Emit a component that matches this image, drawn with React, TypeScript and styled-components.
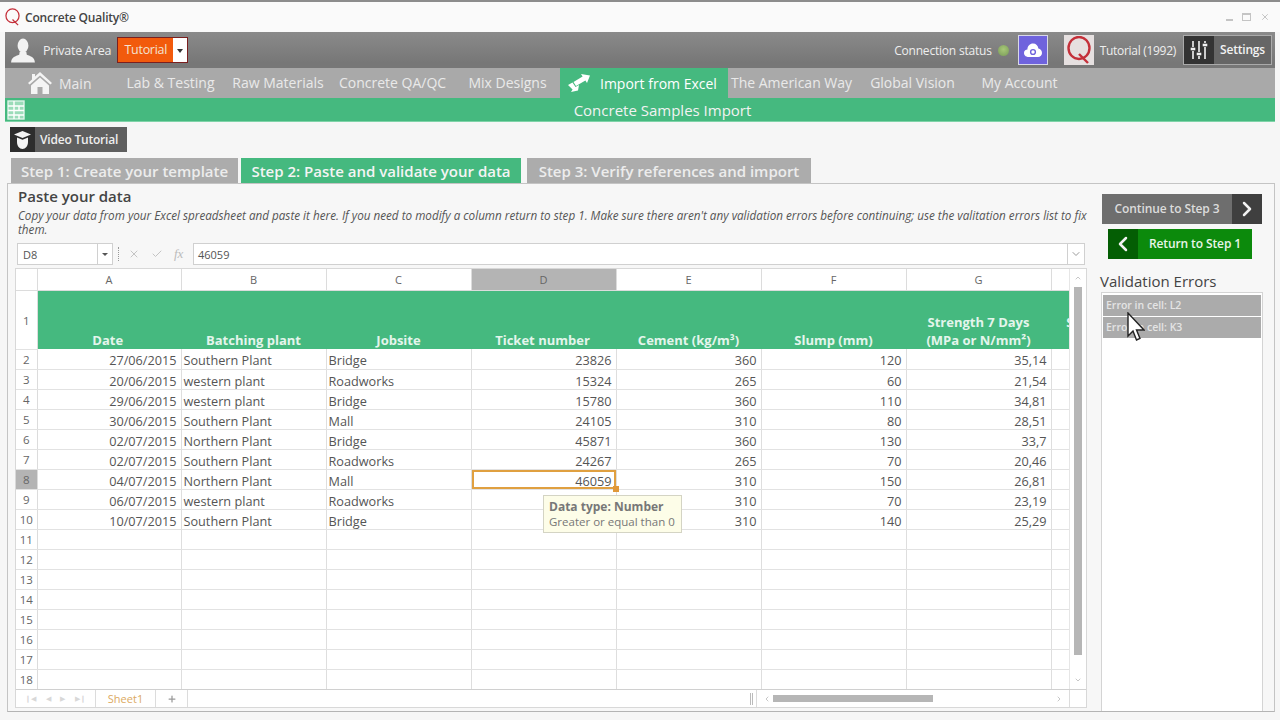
import React from 'react'
import styled, { createGlobalStyle } from 'styled-components'
import { ChevronLeft, ChevronRight, ChevronDown, X, Check, Plus } from 'lucide-react'

const GREEN = '#45b97f'
const FONT = '"Open Sans", "Noto Sans", sans-serif'

const GlobalStyle = createGlobalStyle`
  html, body {
    margin: 0;
    padding: 0;
    background: #f6f6f6;
    font-family: ${FONT};
    overflow: hidden;
  }
  * { box-sizing: border-box; }
`

const navItems = [
  { label: 'Lab & Testing', w: 111 },
  { label: 'Raw Materials', w: 104 },
  { label: 'Concrete QA/QC', w: 125 },
  { label: 'Mix Designs', w: 105 },
]
const navItemsRight = [
  { label: 'The American Way', w: 127 },
  { label: 'Global Vision', w: 115 },
  { label: 'My Account', w: 99 },
]

const columns = ['A', 'B', 'C', 'D', 'E', 'F', 'G']
const rows = [
  ['27/06/2015', 'Southern Plant', 'Bridge', '23826', '360', '120', '35,14'],
  ['20/06/2015', 'western plant', 'Roadworks', '15324', '265', '60', '21,54'],
  ['29/06/2015', 'western plant', 'Bridge', '15780', '360', '110', '34,81'],
  ['30/06/2015', 'Southern Plant', 'Mall', '24105', '310', '80', '28,51'],
  ['02/07/2015', 'Northern Plant', 'Bridge', '45871', '360', '130', '33,7'],
  ['02/07/2015', 'Southern Plant', 'Roadworks', '24267', '265', '70', '20,46'],
  ['04/07/2015', 'Northern Plant', 'Mall', '46059', '310', '150', '26,81'],
  ['06/07/2015', 'western plant', 'Roadworks', '', '310', '70', '23,19'],
  ['10/07/2015', 'Southern Plant', 'Bridge', '', '310', '140', '25,29'],
]
const emptyRows = [11, 12, 13, 14, 15, 16, 17, 18]

const Page = styled.div`
  width: 1280px;
  height: 720px;
  overflow: hidden;
  position: relative;
  border-top: 2px solid #8c8c8c;
  background: #f6f6f6;
  display: flex;
  flex-direction: column;
`

const TitleBar = styled.div`
  height: 30px;
  padding: 0 6px 0 5px;
  display: flex;
  align-items: center;
  gap: 5px;
  background: #fafafa;
  font-size: 12px;
  font-weight: 600;
  color: #444;
`

const TitleText = styled.span`
  flex: 1;
  letter-spacing: -0.2px;
`

const WindowControls = styled.div`
  display: flex;
  align-items: center;
  gap: 9px;
  color: #bbb;
  padding-right: 4px;
`

const MinLine = styled.span`
  width: 7px;
  height: 2px;
  margin-top: 6px;
  background: #c4c4c4;
`

const MaxBox = styled.span`
  width: 9px;
  height: 8px;
  border: 1px solid #c4c4c4;
  border-top-width: 2px;
`

const Shell = styled.div`
  margin: 0 5px;
  display: flex;
  flex-direction: column;
`

const UserBar = styled.div`
  height: 36px;
  padding: 0 3px 0 5px;
  background: linear-gradient(#8a8a8a, #777 85%);
  display: flex;
  align-items: center;
  color: #eee;
  font-size: 12.5px;
`

const AreaLabel = styled.span`
  margin: 0 6px 0 7px;
  letter-spacing: -0.2px;
`

const TutorialSelect = styled.div`
  width: 71px;
  height: 26px;
  display: flex;
  border: 1px solid #7a1f1f;
  background: #f25a0c;
  color: #f3e3d3;
`

const TutorialLabel = styled.span`
  flex: 1;
  line-height: 24px;
  text-align: center;
  letter-spacing: -0.3px;
`

const TutorialArrow = styled.span`
  width: 14px;
  background: #fff;
  display: flex;
  align-items: center;
  justify-content: center;

  &::after {
    content: '';
    border: 3px solid transparent;
    border-top: 4px solid #333;
    margin-top: 4px;
  }
`

const Spacer = styled.div`
  flex: 1;
`

const StatusText = styled.span`
  font-size: 12px;
  letter-spacing: -0.2px;
`

const StatusDot = styled.span`
  width: 11px;
  height: 11px;
  margin: 0 9px 0 6px;
  border-radius: 50%;
  background: radial-gradient(circle at 50% 40%, #a8c878, #789a58);
`

const CloudButton = styled.div`
  width: 30px;
  height: 30px;
  background: #6f63dd;
  border: 1px solid #d8d8e8;
  display: flex;
  align-items: center;
  justify-content: center;
  margin-right: 16px;
`

const QBadge = styled.div`
  width: 30px;
  height: 30px;
  background: #e6e0e0;
  display: flex;
  align-items: center;
  justify-content: center;
`

const AccountName = styled.span`
  margin: 0 7px 0 6px;
  font-size: 12px;
  letter-spacing: -0.3px;
`

const SettingsButton = styled.div`
  width: 89px;
  height: 30px;
  display: flex;
  border: 1px solid #aaa;
  background: #666;
  color: #f2f2f2;
  font-size: 12px;
  font-weight: 600;
`

const SettingsIcon = styled.span`
  width: 30px;
  background: #333;
  display: flex;
  align-items: center;
  justify-content: center;
`

const SettingsLabel = styled.span`
  flex: 1;
  text-align: center;
  line-height: 28px;
  letter-spacing: -0.2px;
`

const NavBar = styled.nav`
  height: 30px;
  background: #a9a9a9;
  display: flex;
  color: #e9e9e9;
  font-size: 14px;
`

const NavItem = styled.div<{ $w: number }>`
  width: ${p => p.$w}px;
  text-align: center;
  line-height: 30px;
  white-space: nowrap;
`

const HomeItem = styled.div`
  width: 110px;
  padding-left: 23px;
  display: flex;
  align-items: center;
  gap: 7px;
`

const ActiveItem = styled.div`
  width: 168px;
  padding-left: 8px;
  display: flex;
  align-items: center;
  gap: 10px;
  background: ${GREEN};
  color: #fff;
  white-space: nowrap;
`

const SectionBand = styled.div`
  height: 24px;
  background: ${GREEN};
  color: #f2f2f2;
  font-size: 15px;
  display: flex;
  align-items: center;
  border-bottom: 1px solid #7fd3a8;
`

const BandIcon = styled.span`
  width: 22px;
  height: 24px;
  display: flex;
  align-items: center;
  justify-content: center;
`

const BandTitle = styled.span`
  flex: 1;
  text-align: center;
  padding-left: 23px;
`

const VideoButton = styled.div`
  margin: 5px 0 0 10px;
  width: 117px;
  height: 25px;
  display: flex;
  background: #5f5f5f;
  color: #eee;
  font-size: 12px;
  font-weight: 600;
  align-items: center;
  letter-spacing: -0.2px;
`

const VideoIcon = styled.span`
  width: 25px;
  height: 25px;
  background: #2d2d2d;
  margin-right: 5px;
  display: flex;
  align-items: center;
  justify-content: center;
`

const Tabs = styled.div`
  margin: 6px 0 0 11px;
  height: 25px;
  display: flex;
`

const Tab = styled.div<{ $active?: boolean; $w: number; $ml?: number }>`
  width: ${p => p.$w}px;
  margin-left: ${p => p.$ml ?? 0}px;
  background: ${p => (p.$active ? GREEN : '#acacac')};
  color: ${p => (p.$active ? '#f4f4f4' : '#ececec')};
  font-size: 15px;
  font-weight: 600;
  line-height: 27px;
  text-align: center;
  white-space: nowrap;
`

const Panel = styled.div`
  margin-left: 7px;
  width: 1268px;
  height: 529px;
  display: flex;
  border: 1px solid #c4c4c4;
  border-bottom-color: #b4b4b4;
  background: #f7f7f7;
`

const LeftColumn = styled.div`
  width: 1084px;
  padding: 3px 0 0 7px;
  display: flex;
  flex-direction: column;
`

const Heading = styled.h2`
  margin: 0 0 0 3px;
  font-size: 15px;
  line-height: 18px;
  font-weight: 600;
  color: #444;
`

const Hint = styled.p`
  margin: 3px 0 0 3px;
  width: 1074px;
  font-size: 11.7px;
  line-height: 14px;
  font-style: italic;
  color: #555;
`

const FormulaBar = styled.div`
  margin: 7px 0 0 2px;
  width: 1068px;
  height: 22px;
  display: flex;
  align-items: stretch;
  font-size: 11px;
  color: #555;
`

const NameBox = styled.div`
  width: 96px;
  display: flex;
  align-items: center;
  justify-content: space-between;
  padding-left: 5px;
  background: #fff;
  border: 1px solid #d0d0d0;
`

const NameArrow = styled.span`
  width: 15px;
  height: 100%;
  border-left: 1px solid #d0d0d0;
  display: flex;
  align-items: center;
  justify-content: center;

  &::after {
    content: '';
    border: 3px solid transparent;
    border-top: 3px solid #555;
    margin-top: 3px;
  }
`

const Grip = styled.span`
  width: 1px;
  margin: 4px 9px 4px 5px;
  border-left: 1px dotted #999;
`

const FormulaIcons = styled.div`
  width: 65px;
  display: flex;
  align-items: center;
  gap: 11px;
  color: #c4c4c4;
`

const Fx = styled.i`
  font-family: 'Liberation Serif', serif;
  font-size: 13px;
  color: #bbb;
`

const FormulaInput = styled.div`
  flex: 1;
  display: flex;
  align-items: center;
  padding-left: 4px;
  background: #fff;
  border: 1px solid #d0d0d0;
`

const FormulaToggle = styled.div`
  width: 17px;
  display: flex;
  align-items: center;
  justify-content: center;
  background: #fff;
  border: 1px solid #d0d0d0;
  border-left: 0;
  color: #999;
`

const Sheet = styled.div`
  margin-top: 3px;
  width: 1072px;
  height: 440px;
  display: flex;
  flex-direction: column;
  background: #fff;
  border: 1px solid #d8d8d8;
`

const SheetBody = styled.div`
  flex: 1;
  display: flex;
  overflow: hidden;
  position: relative;
`

const TableClip = styled.div`
  width: 1053px;
  overflow: hidden;
`

const Table = styled.table`
  border-collapse: collapse;
  table-layout: fixed;
  width: 1180px;
  font-size: 12.7px;
  color: #555;
`

const HeadCell = styled.th<{ $selected?: boolean }>`
  height: 21px;
  padding: 0;
  font-weight: 400;
  text-align: center;
  color: #666;
  font-size: 11px;
  background: ${p => (p.$selected ? '#b4b4b4' : '#fff')};
  border-right: 1px solid #dcdcdc;
  border-bottom: 1px solid #dcdcdc;
`

const ColCell = styled.col<{ $w: number }>`
  width: ${p => p.$w}px;
`

const RowHead = styled.td<{ $selected?: boolean }>`
  height: 20px;
  padding: 1px 0 0;
  text-align: center;
  font-size: 11.5px;
  color: #666;
  background: ${p => (p.$selected ? '#b4b4b4' : '#fff')};
  border-right: 1px solid #dcdcdc;
  border-bottom: 1px solid #e2e2e2;
`

const TitleCell = styled.td<{ $shift?: number }>`
  height: 59px;
  padding: 0 ${p => 2 + (p.$shift ?? 0)}px 0 2px;
  background: ${GREEN};
  color: #e4f5ec;
  font-size: 13px;
  line-height: 18px;
  font-weight: 700;
  text-align: center;
  vertical-align: bottom;
  white-space: nowrap;
  overflow: hidden;
`

const Cell = styled.td<{ $num?: boolean; $selected?: boolean }>`
  height: 20px;
  padding: 3px 4px 0 2px;
  line-height: 16px;
  text-align: ${p => (p.$num ? 'right' : 'left')};
  white-space: nowrap;
  position: ${p => (p.$selected ? 'relative' : 'static')};
  border-right: 1px solid #dedede;
  border-bottom: 1px solid #e2e2e2;
  box-shadow: ${p => (p.$selected ? 'inset 0 0 0 2px #e0a040' : 'none')};
`

const FillHandle = styled.span`
  position: absolute;
  right: -3px;
  bottom: -3px;
  width: 6px;
  height: 6px;
  background: #e0983a;
`

const ValidationTip = styled.div`
  position: absolute;
  left: 527px;
  top: 226px;
  width: 139px;
  height: 38px;
  padding: 3px 0 0 5px;
  background: #fdfde8;
  border: 1px solid #d4d4c4;
  color: #777;
  font-size: 11.5px;
  line-height: 15px;
  white-space: nowrap;
  z-index: 2;
`

const TipTitle = styled.div`
  font-weight: 700;
  font-size: 12px;
`

const VScroll = styled.div`
  flex: 1;
  display: flex;
  flex-direction: column;
  align-items: center;
  background: #fff;
  border-left: 1px solid #e6e6e6;
`

const ScrollUpDown = styled.span`
  height: 18px;
  color: #aaa;
  display: flex;
  align-items: center;
`

const VThumb = styled.div`
  width: 8px;
  height: 368px;
  background: #b6b6b6;
`

const VTrack = styled.div`
  flex: 1;
`

const SheetFooter = styled.div`
  height: 18px;
  display: flex;
  border-top: 1px solid #d0d0d0;
  font-size: 11px;
`

const SheetNav = styled.div`
  width: 80px;
  display: flex;
  align-items: center;
  justify-content: space-around;
  padding: 0 4px;
  color: #d8d8d8;
  font-size: 7px;
  border-right: 1px solid #dcdcdc;
`

const SheetTab = styled.div`
  width: 60px;
  line-height: 17px;
  text-align: center;
  color: #dcaa62;
  border-right: 1px solid #dcdcdc;
`

const AddSheet = styled.div`
  width: 32px;
  display: flex;
  align-items: center;
  justify-content: center;
  color: #999;
  border-right: 1px solid #dcdcdc;
`

const FooterGap = styled.div`
  flex: 1;
  display: flex;
  justify-content: flex-end;
  align-items: center;
  padding-right: 3px;
`

const SplitGrip = styled.span`
  width: 3px;
  height: 12px;
  border-left: 1px solid #bbb;
  border-right: 1px solid #bbb;
`

const HScroll = styled.div`
  width: 314px;
  display: flex;
  align-items: center;
  padding: 0 6px 0 6px;
  gap: 2px;
  color: #aaa;
  border-left: 1px solid #dcdcdc;
  border-right: 1px solid #dcdcdc;
`

const HThumb = styled.div`
  width: 160px;
  height: 7px;
  background: #b6b6b6;
`

const FooterCorner = styled.div`
  width: 16px;
`

const RightColumn = styled.div`
  flex: 1;
  padding: 10px 0 0 8px;
  display: flex;
  flex-direction: column;
  position: relative;
`

const StepButton = styled.div<{ $back?: boolean }>`
  width: ${p => (p.$back ? 144 : 160)}px;
  height: 30px;
  margin: ${p => (p.$back ? '5px 0 0 8px' : '0 0 0 2px')};
  display: flex;
  flex-direction: ${p => (p.$back ? 'row' : 'row-reverse')};
  background: ${p => (p.$back ? '#0c8a0c' : '#6e6e6e')};
  color: ${p => (p.$back ? '#e8f5e8' : '#dcdcdc')};
  font-size: 12px;
  font-weight: 600;
  letter-spacing: -0.1px;
`

const StepArrow = styled.span<{ $back?: boolean }>`
  width: 30px;
  background: ${p => (p.$back ? '#045e04' : '#3f3f3f')};
  color: #f2f2f2;
  display: flex;
  align-items: center;
  justify-content: center;
`

const StepLabel = styled.span`
  flex: 1;
  text-align: center;
  line-height: 30px;
`

const ErrorsTitle = styled.h3`
  margin: 12px 0 0 0;
  font-size: 15px;
  line-height: 20px;
  font-weight: 400;
  color: #444;
`

const ErrorList = styled.div`
  margin: 1px 0 0 1px;
  width: 162px;
  flex: 1;
  padding: 2px 1px;
  display: flex;
  flex-direction: column;
  gap: 1px;
  background: #fff;
  border: 1px solid #d4d4d4;
  border-bottom: 0;
`

const ErrorRow = styled.div`
  height: 21px;
  padding-left: 3px;
  background: #ababab;
  color: #e4e4e4;
  font-size: 10.5px;
  font-weight: 600;
  line-height: 21px;
`

const Cursor = styled.svg`
  position: absolute;
  left: 1127px;
  top: 310px;
  z-index: 5;
`

const UserIcon = () => (
  <svg width="26" height="27" viewBox="0 0 24 24" fill="#f2f2f2">
    <ellipse cx="12" cy="7.5" rx="5" ry="6.5" />
    <path d="M9 13 L15 13 L15.5 16 C19 17.5 22.5 18 23 23 L1 23 C1.5 18 5 17.5 8.5 16 Z" />
  </svg>
)

const QLogo = ({ w, h, stroke }: { w: number; h: number; stroke: number }) => (
  <svg width={w} height={h} viewBox="0 0 24 28" fill="none" stroke="#c4303a" strokeWidth={stroke}>
    <ellipse cx="12" cy="12" rx="10.5" ry="11" />
    <path d="M12 18 L21 27" />
  </svg>
)

const HomeIcon = () => (
  <svg width="24" height="22" viewBox="0 0 24 22" fill="#f4f4f4">
    <path d="M12 0 L24 11 L22.4 12.6 L12 3.4 L1.6 12.6 L0 11 L4 7.4 L4 2 L7 2 L7 4.6 Z" />
    <path d="M12 5.4 L21 13.4 L21 22 L14.5 22 L14.5 15 L9.5 15 L9.5 22 L3 22 L3 13.4 Z" />
  </svg>
)

const SwapIcon = () => (
  <svg width="22" height="18" viewBox="0 0 22 18" fill="#fff">
    <path d="M13 0 L22 1.5 L19 9 L17.4 6.4 L8 12 L5.5 8 L14.6 2.6 Z" />
    <path d="M0 11 L4.5 8.5 L7.5 13 L11 11 L10 16.5 L3 18 L4.6 15.4 Z" />
  </svg>
)

const TableIcon = () => (
  <svg width="18" height="20" viewBox="0 0 18 20" fill="none" stroke="#dff3e8" strokeWidth="1.4">
    <rect x="1" y="1" width="16" height="18" fill="#9bdcb9" />
    <path d="M1 6 H17 M1 10.5 H17 M1 15 H17 M7 1 V19 M12 6 V10.5 M12 15 V19" stroke="#fff" />
  </svg>
)

const CloudIcon = () => (
  <svg width="18" height="14" viewBox="0 0 18 14">
    <path d="M5 14 C1 14 0 11.5 0 10 C0 8 1.5 6.5 3.4 6.5 C3.4 3 6 0.5 9 0.5 C12 0.5 14 2.5 14.4 5.5 C16.5 5.8 18 7.6 18 10 C18 12 16.4 14 14 14 Z" fill="#fff" />
    <circle cx="9" cy="9" r="2.4" fill="none" stroke="#6f63dd" strokeWidth="1.4" />
  </svg>
)

const SlidersIcon = () => (
  <svg width="18" height="20" viewBox="0 0 18 20" stroke="#f2f2f2" strokeWidth="1.6" fill="#f2f2f2">
    <path d="M3 1 V7 M3 11 V19 M9 1 V12 M9 16 V19 M15 1 V3 M15 7 V19" />
    <rect x="1" y="8" width="4" height="2" strokeWidth="0.6" />
    <rect x="7" y="13" width="4" height="2" strokeWidth="0.6" />
    <rect x="13" y="4" width="4" height="2" strokeWidth="0.6" />
  </svg>
)

const CapIcon = () => (
  <svg width="17" height="18" viewBox="0 0 17 18" fill="#f4f4f4">
    <path d="M8.5 0 L17 3.5 L8.5 7 L0 3.5 Z" />
    <path d="M3 6.6 L8.5 8.8 L14 6.6 L14 11 C14 15 11.5 18 8.5 18 C5.5 18 3 15 3 11 Z" />
  </svg>
)

const App = () => {
  return (
    <>
      <GlobalStyle />
      <Page>
        <TitleBar>
          <QLogo w={15} h={18} stroke={2} />
          <TitleText>Concrete Quality®</TitleText>
          <WindowControls>
            <MinLine />
            <MaxBox />
            <X size={10} />
          </WindowControls>
        </TitleBar>

        <Shell>
          <UserBar>
            <UserIcon />
            <AreaLabel>Private Area</AreaLabel>
            <TutorialSelect>
              <TutorialLabel>Tutorial</TutorialLabel>
              <TutorialArrow />
            </TutorialSelect>
            <Spacer />
            <StatusText>Connection status</StatusText>
            <StatusDot />
            <CloudButton>
              <CloudIcon />
            </CloudButton>
            <QBadge>
              <QLogo w={24} h={28} stroke={2.4} />
            </QBadge>
            <AccountName>Tutorial (1992)</AccountName>
            <SettingsButton>
              <SettingsIcon>
                <SlidersIcon />
              </SettingsIcon>
              <SettingsLabel>Settings</SettingsLabel>
            </SettingsButton>
          </UserBar>

          <NavBar>
            <HomeItem>
              <HomeIcon />
              Main
            </HomeItem>
            {navItems.map(item => (
              <NavItem key={item.label} $w={item.w}>{item.label}</NavItem>
            ))}
            <ActiveItem>
              <SwapIcon />
              Import from Excel
            </ActiveItem>
            {navItemsRight.map(item => (
              <NavItem key={item.label} $w={item.w}>{item.label}</NavItem>
            ))}
          </NavBar>

          <SectionBand>
            <BandIcon>
              <TableIcon />
            </BandIcon>
            <BandTitle>Concrete Samples Import</BandTitle>
          </SectionBand>
        </Shell>

        <VideoButton>
          <VideoIcon>
            <CapIcon />
          </VideoIcon>
          Video Tutorial
        </VideoButton>

        <Tabs>
          <Tab $w={227}>Step 1: Create your template</Tab>
          <Tab $w={280} $ml={3} $active>Step 2: Paste and validate your data</Tab>
          <Tab $w={284} $ml={6}>Step 3: Verify references and import</Tab>
        </Tabs>

        <Panel>
          <LeftColumn>
            <Heading>Paste your data</Heading>
            <Hint>
              Copy your data from your Excel spreadsheet and paste it here. If you need to modify a column return to step 1. Make sure there aren't any validation errors before continuing; use the valitation errors list to fix them.
            </Hint>

            <FormulaBar>
              <NameBox>
                D8
                <NameArrow />
              </NameBox>
              <Grip />
              <FormulaIcons>
                <X size={12} />
                <Check size={12} />
                <Fx>fx</Fx>
              </FormulaIcons>
              <FormulaInput>46059</FormulaInput>
              <FormulaToggle>
                <ChevronDown size={12} />
              </FormulaToggle>
            </FormulaBar>

            <Sheet>
              <SheetBody>
                <TableClip>
                  <Table>
                    <colgroup>
                      <ColCell $w={21} />
                      <ColCell $w={144} />
                      <ColCell $w={145} />
                      <ColCell $w={145} />
                      <ColCell $w={145} />
                      <ColCell $w={145} />
                      <ColCell $w={145} />
                      <ColCell $w={145} />
                      <ColCell $w={145} />
                    </colgroup>
                    <thead>
                      <tr>
                        <HeadCell />
                        {columns.map(c => (
                          <HeadCell key={c} $selected={c === 'D'}>{c}</HeadCell>
                        ))}
                        <HeadCell />
                      </tr>
                    </thead>
                    <tbody>
                      <tr>
                        <RowHead>1</RowHead>
                        <TitleCell $shift={3}>Date</TitleCell>
                        <TitleCell>Batching plant</TitleCell>
                        <TitleCell>Jobsite</TitleCell>
                        <TitleCell $shift={2}>Ticket number</TitleCell>
                        <TitleCell>Cement (kg/m³)</TitleCell>
                        <TitleCell>Slump (mm)</TitleCell>
                        <TitleCell>Strength 7 Days<br />(MPa or N/mm²)</TitleCell>
                        <TitleCell $shift={5}>Strength 28 Days<br />(MPa or N/mm²)</TitleCell>
                      </tr>
                      {rows.map((row, i) => (
                        <tr key={i}>
                          <RowHead $selected={i === 6}>{i + 2}</RowHead>
                          {row.map((value, c) => (
                            <Cell key={c} $num={c === 0 || c > 2} $selected={i === 6 && c === 3}>
                              {value}
                              {i === 6 && c === 3 && <FillHandle />}
                            </Cell>
                          ))}
                          <Cell />
                        </tr>
                      ))}
                      {emptyRows.map(n => (
                        <tr key={n}>
                          <RowHead>{n}</RowHead>
                          {columns.map(c => <Cell key={c} />)}
                          <Cell />
                        </tr>
                      ))}
                    </tbody>
                  </Table>
                </TableClip>
                <VScroll>
                  <ScrollUpDown>
                    <ChevronDown size={8} style={{ transform: 'rotate(180deg)' }} />
                  </ScrollUpDown>
                  <VThumb />
                  <VTrack />
                  <ScrollUpDown>
                    <ChevronDown size={8} />
                  </ScrollUpDown>
                </VScroll>
                <ValidationTip>
                  <TipTitle>Data type: Number</TipTitle>
                  Greater or equal than 0
                </ValidationTip>
              </SheetBody>
              <SheetFooter>
                <SheetNav>
                  <span>❙◀</span>
                  <span>◀</span>
                  <span>▶</span>
                  <span>▶❙</span>
                </SheetNav>
                <SheetTab>Sheet1</SheetTab>
                <AddSheet>
                  <Plus size={10} strokeWidth={3} />
                </AddSheet>
                <FooterGap>
                  <SplitGrip />
                </FooterGap>
                <HScroll>
                  <ChevronLeft size={8} />
                  <HThumb />
                  <Spacer />
                  <ChevronRight size={8} />
                </HScroll>
                <FooterCorner />
              </SheetFooter>
            </Sheet>
          </LeftColumn>

          <RightColumn>
            <StepButton>
              <StepArrow>
                <ChevronRight size={24} strokeWidth={2.5} />
              </StepArrow>
              <StepLabel>Continue to Step 3</StepLabel>
            </StepButton>
            <StepButton $back>
              <StepArrow $back>
                <ChevronLeft size={24} strokeWidth={2.5} />
              </StepArrow>
              <StepLabel>Return to Step 1</StepLabel>
            </StepButton>
            <ErrorsTitle>Validation Errors</ErrorsTitle>
            <ErrorList>
              <ErrorRow>Error in cell: L2</ErrorRow>
              <ErrorRow>Error in cell: K3</ErrorRow>
            </ErrorList>
          </RightColumn>
        </Panel>

        <Cursor width="18" height="30" viewBox="0 0 18 30">
          <path d="M1 1 L1 24 L6 19 L9.5 28 L13 26.5 L9.5 18 L17 18 Z" fill="#fff" stroke="#222" strokeWidth="1.4" />
        </Cursor>
      </Page>
    </>
  )
}

export default App
